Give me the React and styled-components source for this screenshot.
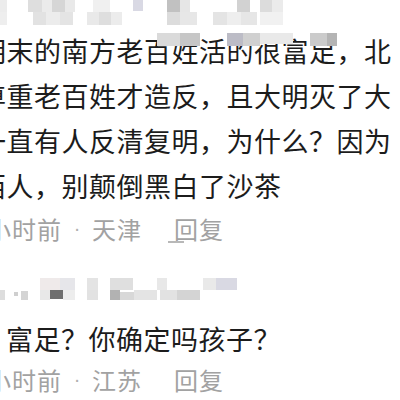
import React from "react";
import styled, { createGlobalStyle } from "styled-components";

const GlobalStyle = createGlobalStyle`
    html, body {
        margin: 0;
        padding: 0;
        background: #ffffff;
    }
`;

// censored name blocks, [x, y, w, h, colour]
const topName = [
    [0, 0, 7, 12, "#ececec"],
    [28, 0, 14, 12, "#dedede"],
    [42, 0, 10, 12, "#ebebeb"],
    [52, 0, 13, 12, "#d6d6d6"],
    [65, 0, 10, 12, "#e9e9e9"],
    [93, 0, 17, 12, "#f0f0f0"],
    [133, 0, 10, 11, "#d9d9e4"],
    [167, 0, 13, 12, "#c1c1c1"],
    [180, 0, 10, 12, "#e6e6e6"],
    [237, 0, 13, 12, "#d2d2d2"],
    [260, 0, 12, 12, "#dcdcdc"],
    [272, 0, 11, 12, "#ebebeb"],
    [0, 12, 7, 13, "#eeeeee"],
    [33, 12, 13, 13, "#e2e2e2"],
    [46, 12, 14, 13, "#ececec"],
    [60, 12, 13, 13, "#e4e4e4"],
    [87, 12, 12, 13, "#e9e9e9"],
    [99, 12, 12, 13, "#dedede"],
    [111, 12, 11, 13, "#ececec"],
    [167, 12, 13, 13, "#dcdcdc"],
    [180, 12, 17, 13, "#e7e7e7"],
    [213, 12, 14, 13, "#e4e4e4"],
    [227, 12, 14, 13, "#eeeeee"],
    [241, 12, 16, 13, "#e6e6e6"],
    [260, 12, 23, 13, "#f1f1f1"],
];

const overName = [
    [157, 0, 23, 13, "#dadada"],
    [180, 0, 20, 13, "#c6c6c6"],
    [227, 0, 16, 13, "#bcbcc6"],
    [243, 0, 17, 13, "#d0d0d0"],
    [260, 0, 33, 11, "#e9e9e9"],
    [310, 0, 17, 13, "#cbcbcb"],
    [327, 0, 10, 13, "#b4b4b4"],
];

const replyName = [
    [40, 2, 20, 12, "#efeaea"],
    [60, 2, 15, 12, "#e6e6ea"],
    [87, 2, 11, 12, "#e4e4e4"],
    [110, 2, 23, 12, "#dfdfdf"],
    [157, 2, 10, 12, "#e8e8e8"],
    [203, 2, 13, 12, "#e9e9e9"],
    [216, 2, 21, 12, "#d9d9e3"],
    [0, 14, 5, 10, "#dddddd"],
    [14, 16, 4, 4, "#cfcfcf"],
    [21, 15, 7, 9, "#d4d4d4"],
    [40, 14, 10, 10, "#e8e8e8"],
    [50, 14, 13, 9, "#6f6f6f"],
    [63, 14, 12, 10, "#ededed"],
    [87, 14, 11, 10, "#e2e2e2"],
    [110, 14, 10, 10, "#b2b2b2"],
    [120, 16, 14, 8, "#d8d8d8"],
    [134, 14, 23, 10, "#e4e4e4"],
    [160, 14, 17, 10, "#e2e2e2"],
    [177, 14, 23, 10, "#d4d4d4"],
];

const Mosaic = ({ blocks, height }) => (
    <MosaicSvg width="400" height={height} viewBox={`0 0 400 ${height}`}>
        {blocks.map(([x, y, w, h, c], i) => (
            <rect key={i} x={x} y={y} width={w} height={h} fill={c} />
        ))}
    </MosaicSvg>
);

const comments = [
    {
        lines: [
            "明末的南方老百姓活的很富足，北",
            "尊重老百姓才造反，且大明灭了大",
            "一直有人反清复明，为什么？因为",
            "西人，别颠倒黑白了沙茶",
        ],
        shift: -21,
        time: "小时前",
        place: "天津",
        name: topName,
    },
    {
        lines: ["富足？你确定吗孩子？"],
        shift: 6,
        time: "小时前",
        place: "江苏",
        name: replyName,
    },
];

class App extends React.Component {
    render() {
        return (
            <Page>
                <GlobalStyle />
                {comments.map((c, i) => (
                    <Comment key={i} first={i === 0}>
                        <Mosaic blocks={c.name} height={i === 0 ? 28 : 26} />
                        <Body first={i === 0}>
                            {c.lines.map((l) => (
                                <Line key={l} shift={c.shift}>{l}</Line>
                            ))}
                            {i === 0 && (
                                <Overlay>
                                    <Mosaic blocks={overName} height={13} />
                                </Overlay>
                            )}
                        </Body>
                        <Meta tall={i === 0}>
                            <Time>{c.time}</Time>
                            <Dot>·</Dot>
                            <Place>{c.place}</Place>
                            <Reply underline={i === 0}>回复</Reply>
                        </Meta>
                    </Comment>
                ))}
            </Page>
        );
    }
}

const Page = styled.div`
    width: 400px;
    height: 400px;
    overflow: hidden;
    background: #ffffff;
    font-family: "Noto Sans CJK SC", "Noto Sans", sans-serif;
`;

const Comment = styled.section`
    padding-top: ${(p) => (p.first ? "0" : "22px")};
`;

const MosaicSvg = styled.svg`
    display: block;
`;

const Body = styled.div`
    position: relative;
    margin-top: ${(p) => (p.first ? "0" : "14px")};
`;

const Line = styled.div`
    margin-left: ${(p) => p.shift}px;
    font-size: 27px;
    line-height: 45px;
    letter-spacing: 0.5px;
    color: #1c1c1c;
    white-space: nowrap;
`;

const Overlay = styled.div`
    position: absolute;
    left: 0;
    top: 5px;
`;

const Meta = styled.div`
    display: flex;
    align-items: center;
    box-sizing: border-box;
    height: ${(p) => (p.tall ? "46px" : "42px")};
    padding-bottom: 6px;
    margin-left: -13px;
    font-size: 24px;
    letter-spacing: 1px;
    color: #a2a2a2;
    white-space: nowrap;
`;

const Time = styled.span`
    width: 75px;
`;

const Dot = styled.span`
    width: 30px;
    text-align: center;
    letter-spacing: 0;
    font-family: "Liberation Sans", Arial, sans-serif;
    font-size: 20px;
    color: #b0b0b0;
`;

const Place = styled.span`
    width: 82px;
`;

const Reply = styled.span`
    position: relative;

    &::before {
        content: "";
        display: ${(p) => (p.underline ? "block" : "none")};
        position: absolute;
        left: -6px;
        bottom: 3px;
        width: 16px;
        height: 2px;
        background: #b8b8b8;
    }
`;

export default App;
